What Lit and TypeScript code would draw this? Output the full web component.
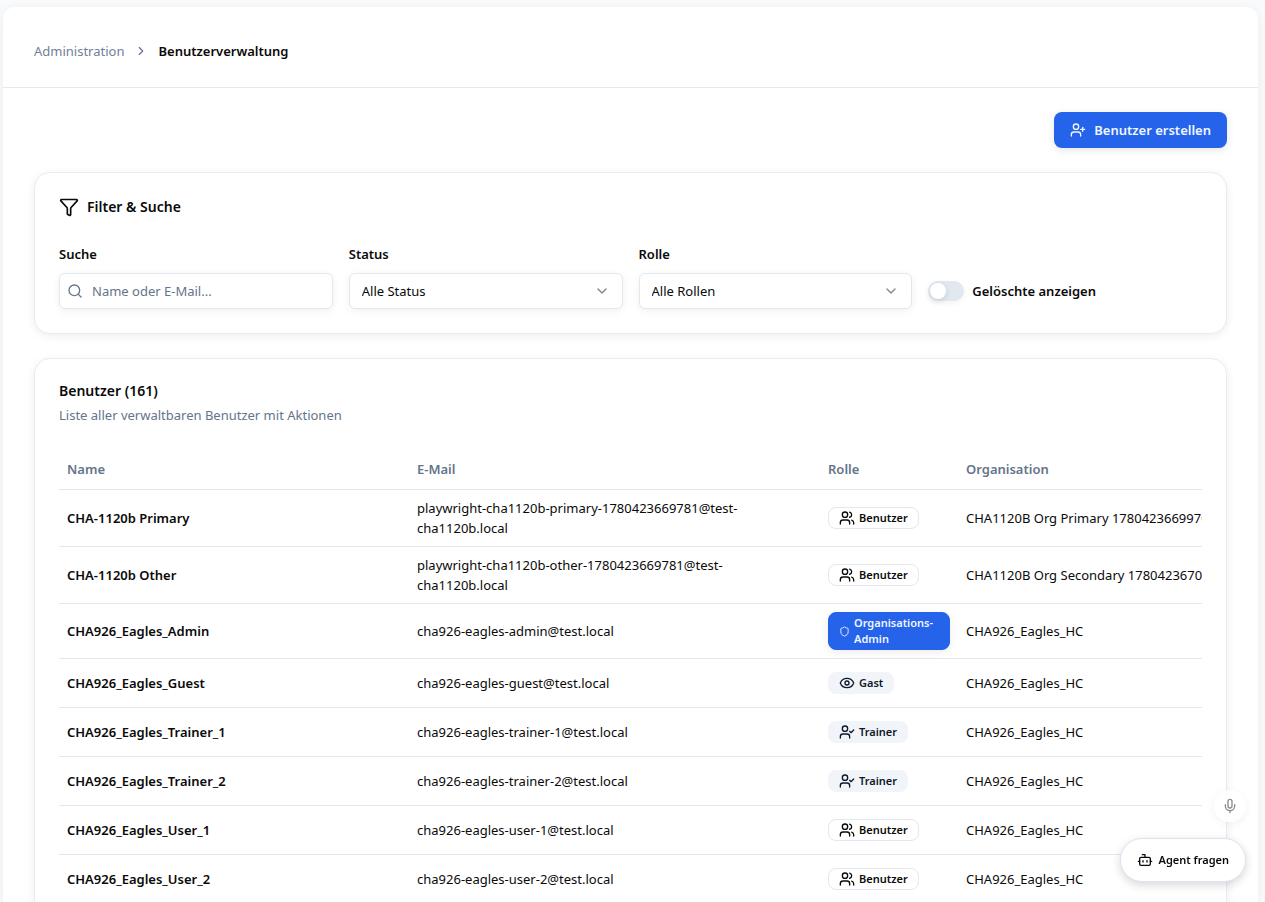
import { LitElement, html, css, svg } from "lit";
import { customElement, property, state } from "lit/decorators.js";
import { classMap } from "lit/directives/class-map.js";

type Role = "user" | "admin" | "guest" | "trainer";

interface User {
  name: string;
  email: string;
  role: Role;
  org: string;
}

const USERS: User[] = [
  { name: "CHA-1120b Primary", email: "playwright-cha1120b-primary-1780423669781@test-cha1120b.local", role: "user", org: "CHA1120B Org Primary 1780423669970" },
  { name: "CHA-1120b Other", email: "playwright-cha1120b-other-1780423669781@test-cha1120b.local", role: "user", org: "CHA1120B Org Secondary 1780423670781" },
  { name: "CHA926_Eagles_Admin", email: "cha926-eagles-admin@test.local", role: "admin", org: "CHA926_Eagles_HC" },
  { name: "CHA926_Eagles_Guest", email: "cha926-eagles-guest@test.local", role: "guest", org: "CHA926_Eagles_HC" },
  { name: "CHA926_Eagles_Trainer_1", email: "cha926-eagles-trainer-1@test.local", role: "trainer", org: "CHA926_Eagles_HC" },
  { name: "CHA926_Eagles_Trainer_2", email: "cha926-eagles-trainer-2@test.local", role: "trainer", org: "CHA926_Eagles_HC" },
  { name: "CHA926_Eagles_User_1", email: "cha926-eagles-user-1@test.local", role: "user", org: "CHA926_Eagles_HC" },
  { name: "CHA926_Eagles_User_2", email: "cha926-eagles-user-2@test.local", role: "user", org: "CHA926_Eagles_HC" },
];

const ICONS = {
  chevronRight: svg`<path d="m9 18 6-6-6-6"/>`,
  chevronDown: svg`<path d="m6 9 6 6 6-6"/>`,
  search: svg`<circle cx="11" cy="11" r="8"/><path d="m21 21-4.3-4.3"/>`,
  filter: svg`<path d="M10 20a1 1 0 0 0 .553.895l2 1A1 1 0 0 0 14 21v-7a2 2 0 0 1 .517-1.341L21.74 4.67A1 1 0 0 0 21 3H3a1 1 0 0 0-.742 1.67l7.225 7.989A2 2 0 0 1 10 14z"/>`,
  userPlus: svg`<path d="M16 21v-2a4 4 0 0 0-4-4H6a4 4 0 0 0-4 4v2"/><circle cx="9" cy="7" r="4"/><path d="M19 8v6"/><path d="M22 11h-6"/>`,
  user: svg`<path d="M16 21v-2a4 4 0 0 0-4-4H6a4 4 0 0 0-4 4v2"/><circle cx="9" cy="7" r="4"/><path d="M22 21v-2a4 4 0 0 0-3-3.87"/><path d="M16 3.13a4 4 0 0 1 0 7.75"/>`,
  trainer: svg`<path d="M16 21v-2a4 4 0 0 0-4-4H6a4 4 0 0 0-4 4v2"/><circle cx="9" cy="7" r="4"/><path d="m16 11 2 2 4-4"/>`,
  guest: svg`<path d="M2.062 12.348a1 1 0 0 1 0-.696 10.75 10.75 0 0 1 19.876 0 1 1 0 0 1 0 .696 10.75 10.75 0 0 1-19.876 0"/><circle cx="12" cy="12" r="3"/>`,
  admin: svg`<path d="M20 13c0 5-3.5 7.5-7.66 8.95a1 1 0 0 1-.67-.01C7.5 20.5 4 18 4 13V6a1 1 0 0 1 1-1c2 0 4.5-1.2 6.24-2.72a1.17 1.17 0 0 1 1.52 0C14.51 3.81 17 5 19 5a1 1 0 0 1 1 1z"/>`,
  bot: svg`<path d="M12 8V4H8"/><rect width="16" height="12" x="4" y="8" rx="2"/><path d="M2 14h2"/><path d="M20 14h2"/><path d="M15 13v2"/><path d="M9 13v2"/>`,
  mic: svg`<path d="M12 2a3 3 0 0 0-3 3v7a3 3 0 0 0 6 0V5a3 3 0 0 0-3-3Z"/><path d="M19 10v2a7 7 0 0 1-14 0v-2"/><path d="M12 19v3"/>`,
};

const icon = (name: keyof typeof ICONS, size = 16) => html`<svg
  class="icon"
  width=${size}
  height=${size}
  viewBox="0 0 24 24"
  fill="none"
  stroke="currentColor"
  stroke-width="2"
  stroke-linecap="round"
  stroke-linejoin="round"
  aria-hidden="true"
>${ICONS[name]}</svg>`;

const ROLE_LABELS: Record<Role, string> = {
  user: "Benutzer",
  admin: "Organisations-Admin",
  guest: "Gast",
  trainer: "Trainer",
};

@customElement("role-badge")
export class RoleBadge extends LitElement {
  static styles = css`
    :host {
      display: flex;
    }
    .badge {
      display: inline-flex;
      align-items: center;
      gap: 4px;
      padding: 2px 10px;
      border: 1px solid #e2e8f0;
      border-radius: 8px;
      font-size: 11px;
      line-height: 16px;
      font-weight: 600;
      color: #0a0a0a;
    }
    .soft {
      background: #f1f5f9;
      border-color: #f1f5f9;
      color: #0f172a;
    }
    .solid {
      background: #2563eb;
      border-color: #2563eb;
      color: #f0f6ff;
      box-shadow: 0 2px 8px rgba(0, 0, 0, 0.08);
    }
    .icon {
      flex: none;
    }
  `;

  @property() role: Role = "user";

  render() {
    const r = this.role;
    return html`<span class=${classMap({ badge: true, soft: r === "guest" || r === "trainer", solid: r === "admin" })}>
      ${icon(r, r === "admin" ? 11 : 16)}
      <span>${ROLE_LABELS[r]}</span>
    </span>`;
  }
}

@customElement("app-root")
export class AppRoot extends LitElement {
  static styles = css`
    :host {
      display: block;
      height: 100vh;
      box-sizing: border-box;
      padding: 7px 7px 0 3px;
      overflow: hidden;
      background: #f8fafc;
      color: #0a0a0a;
      font-family: "Noto Sans", "Open Sans", sans-serif;
      font-size: 13px;
      line-height: 20px;
    }
    * {
      box-sizing: border-box;
    }
    h2,
    p,
    ol {
      margin: 0;
      padding: 0;
    }
    .icon {
      flex: none;
    }
    .shell {
      height: 100%;
      display: flex;
      flex-direction: column;
      background: #fff;
      border-radius: 12px 12px 0 0;
      box-shadow: 0 2px 12px rgba(0, 0, 0, 0.06);
    }
    .topbar {
      flex: none;
      display: flex;
      align-items: center;
      height: 81px;
      padding: 8px 31px 0;
      border-bottom: 1px solid #e5e9ef;
    }
    .crumbs {
      display: flex;
      align-items: center;
      gap: 10px;
      list-style: none;
      color: #64748b;
    }
    .crumbs li {
      display: flex;
    }
    .crumbs a {
      color: #71809a;
      text-decoration: none;
    }
    .crumbs .current {
      color: #0a0a0a;
      font-weight: 600;
    }
    .content {
      flex: 1;
      min-height: 0;
      overflow-y: auto;
      scrollbar-width: none;
      display: flex;
      flex-direction: column;
      gap: 24px;
      padding: 24px 31px 0;
    }
    .actions {
      display: flex;
      justify-content: flex-end;
    }
    .primary {
      display: inline-flex;
      align-items: center;
      gap: 8px;
      height: 36px;
      padding: 0 16px;
      border: 0;
      border-radius: 8px;
      background: #2563eb;
      color: #f0f6ff;
      font: inherit;
      font-weight: 600;
      box-shadow: 0 2px 8px rgba(0, 0, 0, 0.1);
    }
    .card {
      flex: none;
      padding: 24px;
      border: 1px solid #e6ecf4;
      border-radius: 16px;
      background: #fff;
      box-shadow: 0 2px 10px rgba(0, 0, 0, 0.07);
    }
    .title {
      display: flex;
      align-items: center;
      gap: 8px;
      font-size: 14px;
      line-height: 20px;
      font-weight: 600;
    }
    .filters {
      display: grid;
      grid-template-columns: repeat(4, minmax(0, 1fr));
      gap: 16px;
      align-items: end;
      margin-top: 28px;
    }
    .field {
      display: flex;
      flex-direction: column;
      gap: 10px;
    }
    .label {
      line-height: 18px;
      font-weight: 600;
    }
    .control {
      display: grid;
      align-items: center;
    }
    .control > * {
      grid-area: 1 / 1;
    }
    .lead {
      margin-left: 8px;
      display: flex;
      color: #64748b;
      pointer-events: none;
    }
    .trail {
      display: flex;
      justify-self: end;
      margin-right: 13px;
      color: #858585;
      pointer-events: none;
    }
    .box {
      width: 100%;
      height: 36px;
      margin: 0;
      padding: 0 12px;
      border: 1px solid #e2e8f0;
      border-radius: 6px;
      background: #fff;
      color: #0a0a0a;
      font: inherit;
      appearance: none;
      box-shadow: 0 2px 8px rgba(0, 0, 0, 0.06);
    }
    .search {
      padding-left: 32px;
    }
    .search::placeholder {
      color: #64748b;
      opacity: 1;
    }
    .toggle {
      display: flex;
      align-items: center;
      gap: 8px;
      height: 36px;
    }
    .switch {
      flex: none;
      display: flex;
      align-items: center;
      appearance: none;
      width: 36px;
      height: 20px;
      margin: 0;
      padding: 2px;
      border-radius: 10px;
      background: #e2e8f0;
      box-shadow: 0 2px 6px rgba(0, 0, 0, 0.05);
    }
    .switch::before {
      content: "";
      width: 16px;
      height: 16px;
      border-radius: 8px;
      background: #fff;
      box-shadow: 0 2px 6px rgba(0, 0, 0, 0.12);
    }
    .switch:checked {
      background: #2563eb;
      justify-content: flex-end;
    }
    .heading {
      line-height: 16px;
    }
    .sub {
      margin-top: 6px;
      color: #64748b;
    }
    .scroller {
      margin-top: 24px;
      overflow-x: auto;
      scrollbar-width: none;
    }
    .table {
      width: 100%;
      min-width: 1180px;
      table-layout: fixed;
      border-collapse: separate;
      border-spacing: 0;
      text-align: left;
    }
    .c-name {
      width: 350px;
    }
    .c-mail {
      width: 411px;
    }
    .c-role {
      width: 138px;
    }
    th {
      height: 41px;
      padding: 0 8px;
      border-bottom: 1px solid #e2e8f0;
      color: #64748b;
      font-weight: 600;
    }
    td {
      height: 49px;
      padding: 8px;
      border-bottom: 1px solid #e2e8f0;
    }
    .name {
      font-weight: 600;
    }
    .mail {
      padding-right: 24px;
    }
    .org {
      white-space: nowrap;
    }
    .floating {
      position: fixed;
      right: 19px;
      bottom: 20px;
      display: flex;
      flex-direction: column;
      align-items: flex-end;
      gap: 16px;
    }
    .mic {
      display: grid;
      place-items: center;
      width: 32px;
      height: 32px;
      padding: 0;
      border: 0;
      border-radius: 16px;
      background: rgba(255, 255, 255, 0.8);
      color: #8c8c8c;
      box-shadow: 0 2px 8px rgba(0, 0, 0, 0.06);
    }
    .agent {
      display: flex;
      align-items: center;
      gap: 6px;
      height: 44px;
      padding: 0 16px;
      border: 1px solid #dbe4f0;
      border-radius: 22px;
      background: #fff;
      color: #0a0a0a;
      font: inherit;
      font-size: 11px;
      font-weight: 600;
      box-shadow: 0 3px 10px rgba(0, 0, 0, 0.16);
    }
  `;

  @state() private showDeleted = false;

  render() {
    return html`
      <div class="shell">
        <header class="topbar">
          <nav aria-label="Breadcrumb">
            <ol class="crumbs">
              <li><a href="#">Administration</a></li>
              <li>${icon("chevronRight", 14)}</li>
              <li class="current" aria-current="page">Benutzerverwaltung</li>
            </ol>
          </nav>
        </header>
        <main class="content">
          <div class="actions">
            <button class="primary" type="button">${icon("userPlus")}<span>Benutzer erstellen</span></button>
          </div>
          <section class="card">
            <h2 class="title">${icon("filter", 20)}Filter &amp; Suche</h2>
            <div class="filters">
              <div class="field">
                <label class="label" for="search">Suche</label>
                <div class="control">
                  <input class="box search" id="search" type="text" placeholder="Name oder E-Mail..." />
                  <span class="lead">${icon("search")}</span>
                </div>
              </div>
              ${this.renderSelect("status", "Status", "Alle Status")}
              ${this.renderSelect("role", "Rolle", "Alle Rollen")}
              <div class="toggle">
                <input
                  class="switch"
                  id="deleted"
                  type="checkbox"
                  role="switch"
                  .checked=${this.showDeleted}
                  @change=${(e: Event) => (this.showDeleted = (e.target as HTMLInputElement).checked)}
                />
                <label class="label" for="deleted">Gelöschte anzeigen</label>
              </div>
            </div>
          </section>
          <section class="card">
            <h2 class="title heading">Benutzer (161)</h2>
            <p class="sub">Liste aller verwaltbaren Benutzer mit Aktionen</p>
            <div class="scroller">
              <table class="table">
                <thead>
                  <tr>
                    <th class="c-name">Name</th>
                    <th class="c-mail">E-Mail</th>
                    <th class="c-role">Rolle</th>
                    <th>Organisation</th>
                  </tr>
                </thead>
                <tbody>
                  ${USERS.map(
                    (u) => html`<tr>
                      <td class="name">${u.name}</td>
                      <td class="mail">${u.email}</td>
                      <td><role-badge .role=${u.role}></role-badge></td>
                      <td class="org">${u.org}</td>
                    </tr>`,
                  )}
                </tbody>
              </table>
            </div>
          </section>
        </main>
      </div>
      <div class="floating">
        <button class="mic" type="button" aria-label="Spracheingabe">${icon("mic")}</button>
        <button class="agent" type="button">${icon("bot")}<span>Agent fragen</span></button>
      </div>
    `;
  }

  private renderSelect(id: string, label: string, value: string) {
    return html`<div class="field">
      <label class="label" for=${id}>${label}</label>
      <div class="control">
        <select class="box" id=${id}>
          <option>${value}</option>
        </select>
        <span class="trail">${icon("chevronDown")}</span>
      </div>
    </div>`;
  }
}
